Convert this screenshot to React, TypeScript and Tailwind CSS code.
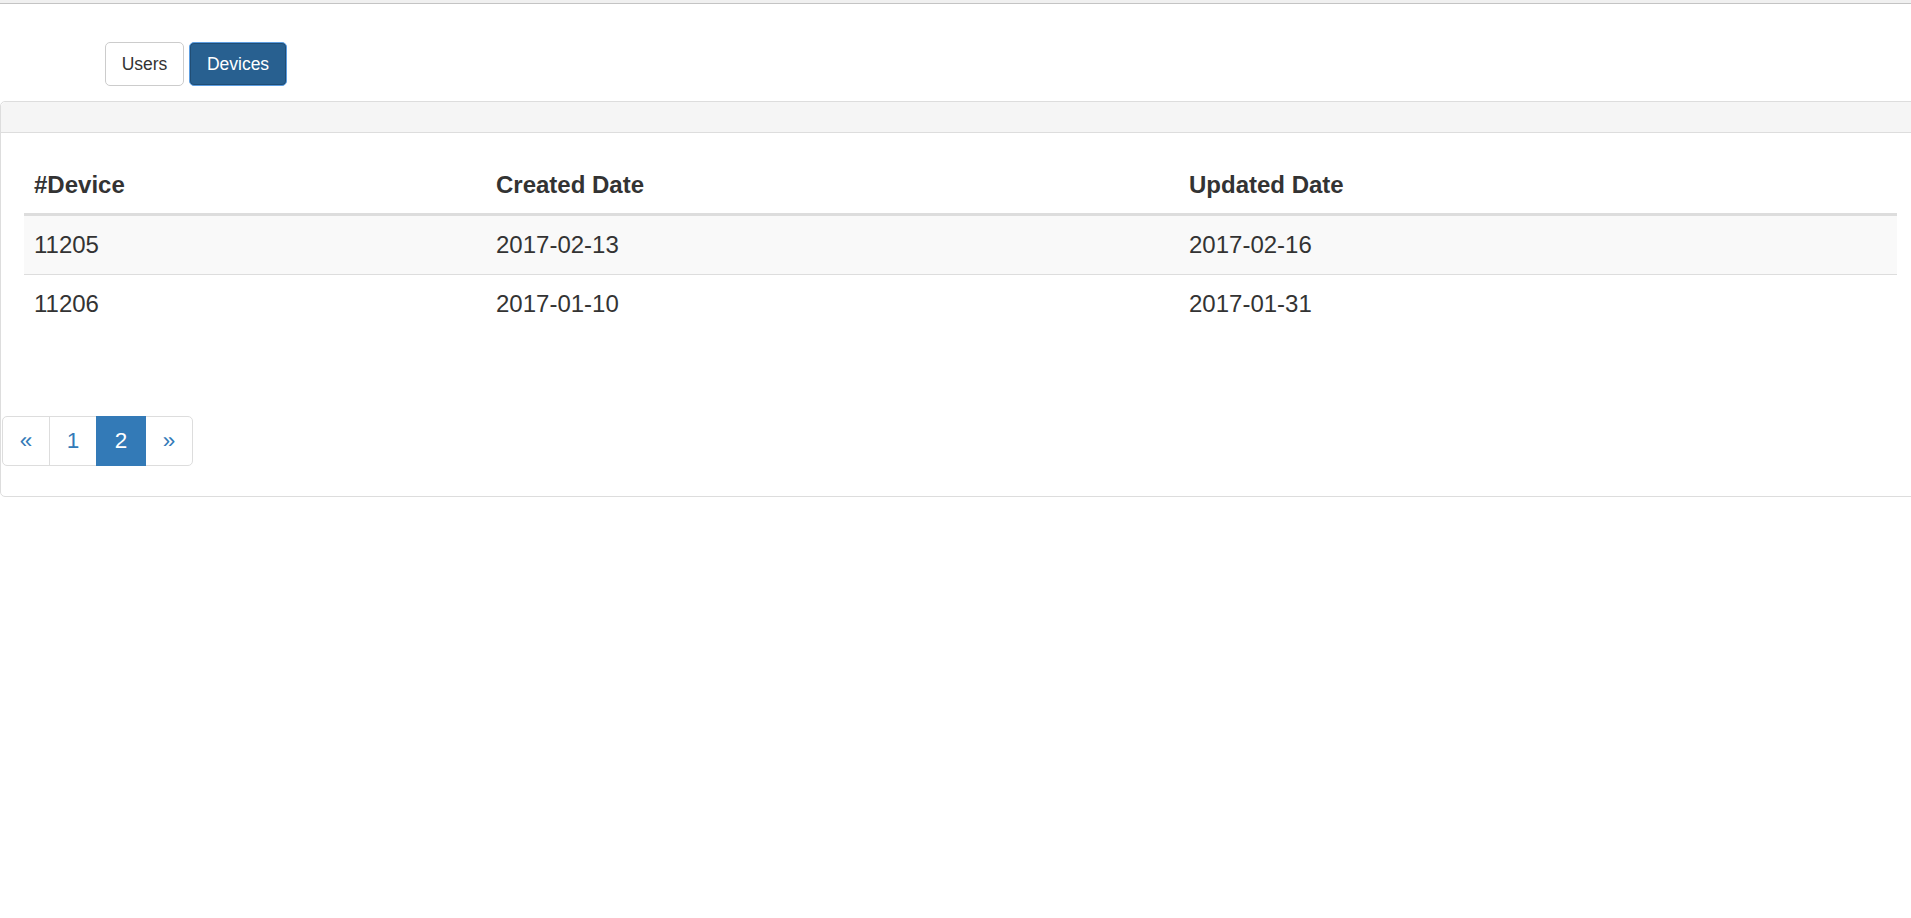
import { useState } from "react";

const DEVICES = [
  { id: "11205", created: "2017-02-13", updated: "2017-02-16" },
  { id: "11206", created: "2017-01-10", updated: "2017-01-31" },
];

const PAGES = ["«", "1", "2", "»"];

export default function App() {
  const [tab, setTab] = useState<"users" | "devices">("devices");
  const [page, setPage] = useState("2");

  return (
    <div
      className="min-h-screen bg-white overflow-x-hidden text-[#333]"
      style={{ fontFamily: '"Liberation Sans", Arial, sans-serif' }}
    >
      <div className="h-[4px] bg-[#f0f0f0] border-b border-[#c4c4c4]" />

      {/* Tabs */}
      <div className="flex gap-[5px] pl-[105px] pt-[38px]">
        <button
          onClick={() => setTab("users")}
          className={`w-[79px] h-[44px] rounded-[5px] border text-[17.5px] ${
            tab === "users"
              ? "bg-[#286090] border-[#5b9de1] text-white shadow-[inset_0_0_0_1px_#204d74]"
              : "bg-white border-[#ccc] text-[#333]"
          }`}
        >
          Users
        </button>
        <button
          onClick={() => setTab("devices")}
          className={`w-[98px] h-[44px] rounded-[5px] border text-[17.5px] ${
            tab === "devices"
              ? "bg-[#286090] border-[#5b9de1] text-white shadow-[inset_0_0_0_1px_#204d74]"
              : "bg-white border-[#ccc] text-[#333]"
          }`}
        >
          Devices
        </button>
      </div>

      {/* Panel */}
      <div className="mt-[15px] w-[1921px] border border-[#ddd] rounded-[5px]">
        <div className="h-[31px] bg-[#f5f5f5] border-b border-[#ddd] rounded-t-[5px]" />

        <div className="px-[23px] pt-[23px]">
          <table className="w-[1873px] border-collapse text-[24px]">
            <thead>
              <tr className="border-b-[3px] border-[#ddd]">
                <th className="w-[462px] py-[10px] leading-[37px] px-[10px] text-left font-bold">#Device</th>
                <th className="w-[693px] py-[10px] leading-[37px] px-[10px] text-left font-bold">Created Date</th>
                <th className="py-[10px] leading-[37px] px-[10px] text-left font-bold">Updated Date</th>
              </tr>
            </thead>
            <tbody>
              {DEVICES.map((d, i) => (
                <tr
                  key={d.id}
                  className={`${i === 0 ? "bg-[#f9f9f9]" : "border-t border-[#ddd]"}`}
                >
                  <td className="py-[10px] leading-[38px] px-[10px]">{d.id}</td>
                  <td className="py-[10px] leading-[38px] px-[10px]">{d.created}</td>
                  <td className="py-[10px] leading-[38px] px-[10px]">{d.updated}</td>
                </tr>
              ))}
            </tbody>
          </table>
        </div>

        {/* Pagination */}
        <div className="pt-[83px] pb-[30px] pl-[1px]">
          <ul className="inline-flex text-[22.5px] leading-[32px]">
            {PAGES.map((p, i) => {
              const active = p === page;
              return (
                <li key={p}>
                  <button
                    onClick={() => (p === "«" || p === "»" ? null : setPage(p))}
                    className={`h-[50px] border ${i > 0 ? "-ml-px" : ""} ${
                      i === 0 ? "rounded-l-[5px]" : ""
                    } ${i === PAGES.length - 1 ? "rounded-r-[5px]" : ""} ${
                      active
                        ? "w-[50px] bg-[#337ab7] border-[#337ab7] text-white relative"
                        : "w-[48px] bg-white border-[#ddd] text-[#337ab7]"
                    }`}
                  >
                    {p}
                  </button>
                </li>
              );
            })}
          </ul>
        </div>
      </div>
    </div>
  );
}
